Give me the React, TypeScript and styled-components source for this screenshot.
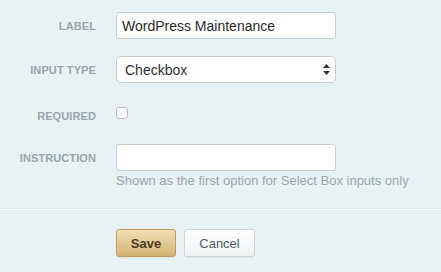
import React from 'react';
import styled, { createGlobalStyle } from 'styled-components';

const GlobalStyle = createGlobalStyle`
  html, body {
    margin: 0;
    padding: 0;
    background: #e8f2f4;
    font-family: "Liberation Sans", Arial, sans-serif;
  }
`;

const Page = styled.div`
  width: 441px;
  height: 272px;
  background: #e8f2f4;
  overflow: hidden;
`;

const Fields = styled.div`
  padding-top: 12px;
  height: 196px;
  border-bottom: 1px solid #dde8eb;
  box-shadow: 0 1px 0 #ffffff;
  box-sizing: content-box;
`;

const Row = styled.div<{ $gap?: number; $align?: string }>`
  display: grid;
  grid-template-columns: 96px 220px;
  column-gap: 20px;
  align-items: ${({ $align }) => $align || 'center'};
  margin-bottom: ${({ $gap }) => ($gap ?? 18)}px;
`;

const Label = styled.label<{ $top?: number }>`
  text-align: right;
  font-size: 11px;
  font-weight: bold;
  text-transform: uppercase;
  color: #98a5ab;
  letter-spacing: 0.1px;
  padding-top: ${({ $top }) => $top || 0}px;
`;

const TextInput = styled.input`
  box-sizing: border-box;
  width: 220px;
  height: 27px;
  margin: 0;
  padding: 0 5px;
  border: 1px solid #c8d0d3;
  border-radius: 3px;
  background: #ffffff;
  font-family: "Liberation Sans", Arial, sans-serif;
  font-size: 14px;
  color: #2a2a2a;
  outline: none;
`;

const SelectWrap = styled.div`
  position: relative;
  width: 220px;
`;

const Select = styled.select`
  box-sizing: border-box;
  appearance: none;
  width: 220px;
  height: 27px;
  margin: 0;
  padding: 0 8px;
  border: 1px solid #c8d0d3;
  border-radius: 5px;
  background: #ffffff;
  font-family: "Liberation Sans", Arial, sans-serif;
  font-size: 14px;
  color: #2f2f3a;
  outline: none;
`;

const Arrows = styled.svg`
  position: absolute;
  right: 6px;
  top: 8px;
  pointer-events: none;
`;

const Check = styled.input`
  appearance: none;
  box-sizing: border-box;
  width: 12px;
  height: 12px;
  margin: 0;
  border: 1px solid #b9c0c3;
  border-radius: 3px;
  background: #ffffff;
`;

const Field = styled.div`
  display: flex;
  flex-direction: column;
`;

const Help = styled.div`
  margin-top: 2px;
  font-size: 13px;
  color: #98a8ae;
  white-space: nowrap;
`;

const Footer = styled.div`
  display: flex;
  gap: 8px;
  padding: 20px 0 0 116px;
`;

const Button = styled.button<{ $primary?: boolean }>`
  box-sizing: border-box;
  height: 28px;
  width: ${({ $primary }) => ($primary ? 60 : 71)}px;
  padding: 0;
  border-radius: 3px;
  font-family: "Liberation Sans", Arial, sans-serif;
  font-size: 13px;
  cursor: pointer;
  border: 1px solid ${({ $primary }) => ($primary ? '#bf9d62' : '#cdd6d9')};
  background: ${({ $primary }) =>
    $primary
      ? 'linear-gradient(#f1dfb5, #d5b274)'
      : 'linear-gradient(#ffffff, #eef3f4)'};
  color: ${({ $primary }) => ($primary ? '#4b3b22' : '#4d5d66')};
  font-weight: ${({ $primary }) => ($primary ? 'bold' : 'normal')};
  box-shadow: 0 1px 0 rgba(0, 0, 0, 0.06);
`;

const App: React.FC = () => {
  return (
    <Page>
      <GlobalStyle />
      <Fields>
        <Row $gap={17}>
          <Label>Label</Label>
          <TextInput defaultValue="WordPress Maintenance" />
        </Row>
        <Row $gap={24}>
          <Label>Input Type</Label>
          <SelectWrap>
            <Select defaultValue="checkbox">
              <option value="checkbox">Checkbox</option>
              <option value="text">Text</option>
              <option value="select">Select Box</option>
            </Select>
            <Arrows width="7" height="11" viewBox="0 0 7 11">
              <path d="M3.5 0 L7 4 L0 4 Z" fill="#333" />
              <path d="M3.5 11 L7 7 L0 7 Z" fill="#333" />
            </Arrows>
          </SelectWrap>
        </Row>
        <Row $gap={22} $align="start">
          <Label $top={3}>Required</Label>
          <Check type="checkbox" />
        </Row>
        <Row $align="start" $gap={0}>
          <Label $top={8}>Instruction</Label>
          <Field>
            <TextInput />
            <Help>Shown as the first option for Select Box inputs only</Help>
          </Field>
        </Row>
      </Fields>
      <Footer>
        <Button $primary>Save</Button>
        <Button>Cancel</Button>
      </Footer>
    </Page>
  );
};

export default App;
